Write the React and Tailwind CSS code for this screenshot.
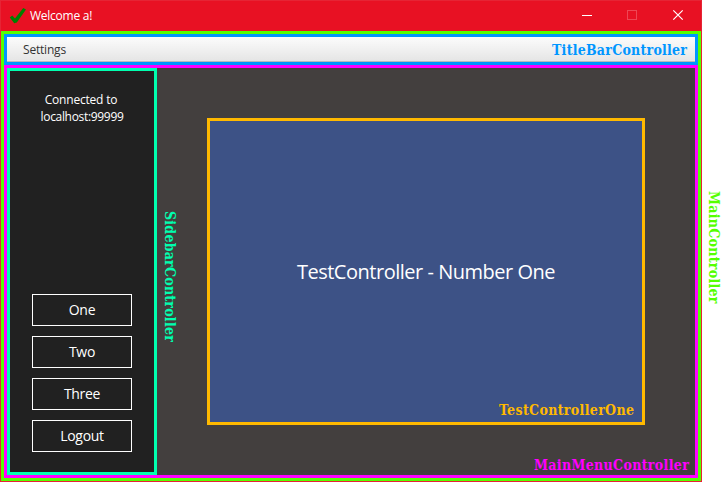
const labelFont = "font-['DejaVu_Serif_Condensed','DejaVu_Serif',serif] font-bold text-[14px] leading-[18px] whitespace-nowrap";

function TitleBar() {
  return (
    <header className="flex h-[30px] items-center text-white">
      <svg className="ml-[8px] h-[16px] w-[17px]" viewBox="0 0 17 16">
        <path d="M0.8 9.4 L3.2 7.5 L6 10.6 L14.2 0 L17 1.4 L7.8 14.6 L5.2 15.2Z" fill="#008000" />
      </svg>
      <span className="ml-[4px] text-[12px] leading-[16px] tracking-[-0.25px]">Welcome a!</span>
      <svg className="ml-auto h-[30px] w-[138px]" viewBox="0 0 138 30" fill="none" shapeRendering="crispEdges">
        <path d="M19 14.5H29" stroke="#fff" />
        <rect x="64.5" y="9.5" width="9" height="9" stroke="#ee4654" />
        <path d="M110.3 9.3 L119.7 18.7 M119.7 9.3 L110.3 18.7" stroke="#fff" strokeWidth="1.2" shapeRendering="auto" />
      </svg>
    </header>
  );
}

function Sidebar() {
  return (
    <aside className="flex w-[150px] flex-col items-center border-[3px] border-[#00ffaf] bg-[#212121] pt-[20px] pb-[20px] text-white">
      <p className="text-center text-[12px] leading-[17px] tracking-[-0.32px]">
        <span className="relative -left-px tracking-[-0.2px]">Connected to</span>
        <br />
        localhost:99999
      </p>
      <nav className="mt-auto flex flex-col gap-[10px]">
        {["One", "Two", "Three", "Logout"].map((name) => (
          <button key={name} className="h-[32px] w-[100px] border border-white text-[14px] leading-[30px] tracking-[-0.3px]">
            {name}
          </button>
        ))}
      </nav>
    </aside>
  );
}

export default function App() {
  return (
    <div className="flex h-[482px] w-[725px] overflow-hidden bg-white font-['Open_Sans','Noto_Sans',sans-serif]">
      <div className="flex h-[482px] w-[702px] shrink-0 flex-col border border-[#e62434] bg-[#e81123]">
        <TitleBar />
        <main className="flex flex-1 flex-col border-[3px] border-[#55ff00]">
          <div className="flex h-[31px] items-center justify-between border-[3px] border-[#0096ff] bg-linear-to-b from-[#fcfcfc] to-[#e4e4e4] pl-[16px] pr-[8px] text-[#333] shadow-[inset_0_-1px_0_#b9b9b9]">
            <span className="text-[12px] leading-[16px] tracking-[-0.2px]">Settings</span>
            <span className={`${labelFont} w-[135px] tracking-[0.24px] text-[#0096ff]`}>TitleBarController</span>
          </div>
          <div className="flex flex-1 border-[3px] border-[#ff00ff] bg-[#433f3e]">
            <Sidebar />
            <div className="flex w-[50px] justify-start pt-[143px] pl-[4px]">
              <span className={`${labelFont} h-[132px] tracking-[0.24px] text-[#00ffaf] [writing-mode:vertical-rl]`}>
                SidebarController
              </span>
            </div>
            <div className="flex w-[488px] flex-col pt-[50px]">
              <section className="flex h-[307px] w-[438px] flex-col items-end border-[3px] border-[#ffb900] bg-[#3d5286]">
                <h1 className="mt-[137px] w-full text-center text-[20px] leading-[28px] tracking-[-0.48px] text-white">
                  TestController - Number One
                </h1>
                <span className={`${labelFont} mt-auto mr-[8px] mb-[3px] w-[135px] tracking-[0.34px] text-[#ffb900]`}>
                  TestControllerOne
                </span>
              </section>
              <span className={`${labelFont} mt-auto mb-[1px] ml-[327px] w-[156px] tracking-[0.34px] text-[#ff00ff]`}>
                MainMenuController
              </span>
            </div>
          </div>
        </main>
      </div>
      <div className="flex w-[23px] justify-start pt-[191px] pl-[3px]">
        <span className={`${labelFont} h-[112px] tracking-[0.29px] text-[#55ff00] [writing-mode:vertical-rl]`}>
          MainController
        </span>
      </div>
    </div>
  );
}
